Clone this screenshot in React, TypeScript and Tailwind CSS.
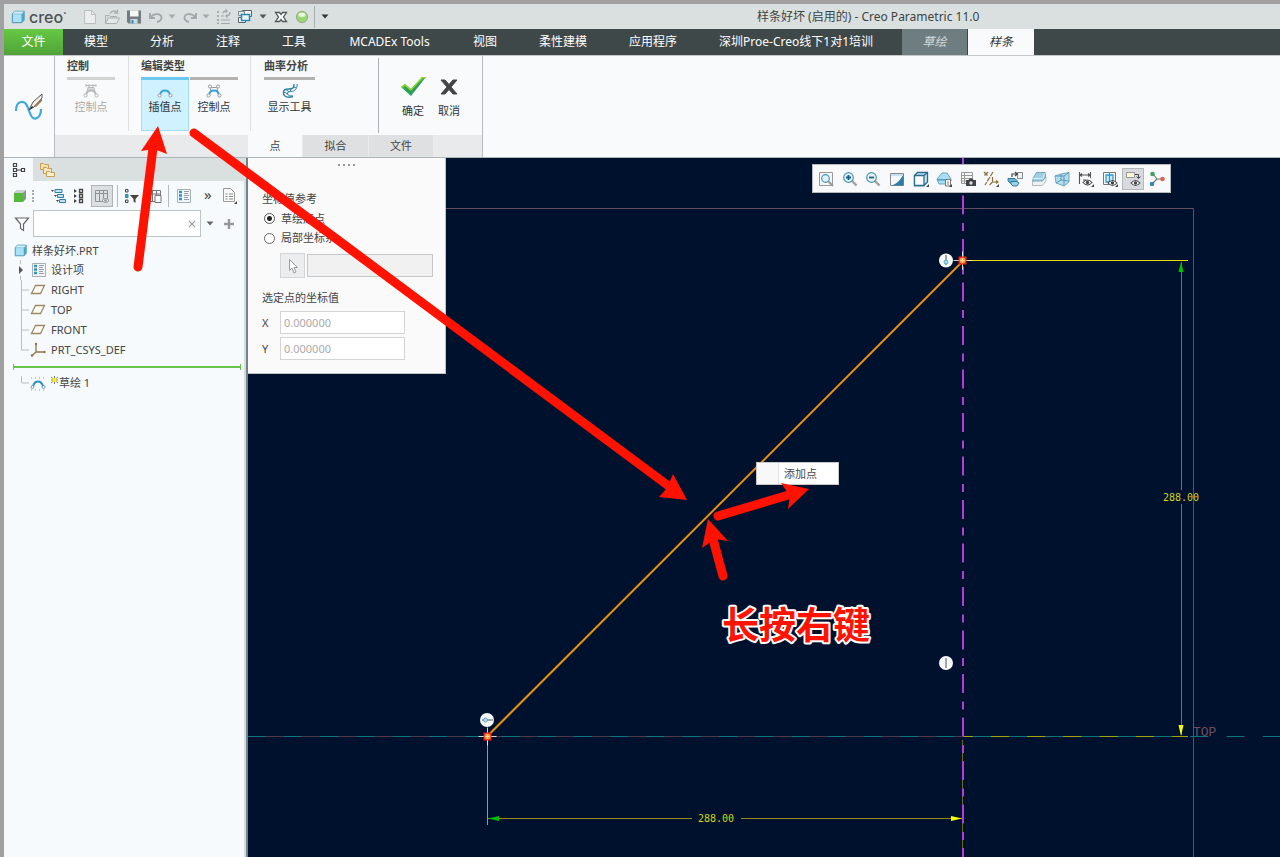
import type { ReactNode } from 'react'
import clsx from 'clsx'

type IconProps = { size?: number; children: ReactNode }

function Icon({ size = 16, children }: IconProps) {
  return (
    <svg width={size} height={size} viewBox="0 0 16 16" fill="none" className="block shrink-0" aria-hidden="true">
      {children}
    </svg>
  )
}

function Caret({ color = '#555' }: { color?: string }) {
  return (
    <svg width="8" height="5" viewBox="0 0 8 5" className="block" aria-hidden="true">
      <path d="M0.5 0.5h7L4 4.5z" fill={color} />
    </svg>
  )
}

/* ---------- shared icons ---------- */

const CubeIcon = ({ size = 16 }: { size?: number }) => (
  <Icon size={size}>
    <path d="M1.5 4.5 4 1.5h11v10l-2.5 3h-11z" fill="#a9e1f7" stroke="#3a87ad" />
    <path d="M12 4.5 15 1.5v10l-3 3z" fill="#4ea3cc" />
    <path d="M1.5 4.5 4 1.5h11L12.3 4.5z" fill="#d5f2fc" stroke="#5fa9cc" strokeWidth=".6" />
  </Icon>
)

const ListIcon = () => (
  <Icon>
    <path d="M1.5 1.5h13v13h-13z" fill="#f3f6f8" stroke="#a6b0b5" />
    <path d="M3 4h3M3 7.5h3M3 11h3" stroke="#2f94c6" strokeWidth="2.4" />
    <path d="M8 3.5h5M8 5.5h4M8 7.5h5M8 9.5h4M8 11.5h5" stroke="#8b979d" strokeWidth=".9" />
  </Icon>
)

const PlaneIcon = () => (
  <Icon>
    <path d="M5.5 3.5h9l-4 8h-9z" fill="#fdfbf5" stroke="#9c8a64" strokeWidth="1.3" />
  </Icon>
)

const CsysIcon = () => (
  <Icon>
    <path d="M6 2v8h9M6 10l-4.500 4" stroke="#8f7448" strokeWidth="1.3" />
    <circle cx="6" cy="2" r="1.200" fill="#8f7448" />
    <circle cx="14.500" cy="10" r="1.200" fill="#8f7448" />
    <circle cx="2" cy="13.500" r="1.200" fill="#8f7448" />
  </Icon>
)

const SketchIcon = () => (
  <Icon>
    <path d="M1 3h14M1 15h14" stroke="#999" strokeDasharray="1 3" />
    <path d="M3 11c2-6 8-6 10 0" stroke="#2e8fbd" strokeWidth="2" />
    <circle cx="2.500" cy="12" r="1.500" fill="#fff" stroke="#4f8aa5" strokeWidth=".8" />
    <circle cx="13.500" cy="12" r="1.500" fill="#fff" stroke="#4f8aa5" strokeWidth=".8" />
  </Icon>
)

const ZoomLens = ({ sign }: { sign: string }) => (
  <Icon>
    <path d="m9.500 9.500 5 5" stroke="#a5a098" strokeWidth="2.4" />
    <circle cx="6.500" cy="6.500" r="4.800" fill="#e3f4fb" stroke="#4b92b5" strokeWidth="1.2" />
    <path d={sign} stroke="#1a5f86" strokeWidth="1.8" />
  </Icon>
)

const Eye = ({ x, y }: { x: number; y: number }) => (
  <g>
    <path d={`M${x} ${y}q4.500-5 9 0q-4.500 5-9 0z`} fill="#fff" stroke="#444" strokeWidth="1.1" />
    <circle cx={x + 4.5} cy={y} r="1.700" fill="#444" />
  </g>
)

const Corner = () => <path d="M16 13v3h-3z" fill="#444" />

/* ---------- title bar ---------- */

function TitleBar() {
  return (
    <header className="flex h-[25px] items-center bg-[#dae0df] text-[#3c4444]">
      <div className="flex w-[78px] shrink-0 items-center gap-1 pl-[7px]">
        <CubeIcon size={14} />
        <span className="font-[Inter] text-[16px] font-medium leading-5 text-[#4b5354]">creo<span className="align-top text-[6px] leading-3">•</span></span>
      </div>
      <div className="flex items-center">
        <button aria-label="新建" className="w-[22px]">
          <Icon><path d="M2.500 1.500h7l4 4v9h-11z" fill="#eceeee" stroke="#b9bebe" /><path d="M9.500 1.500v4h4" stroke="#b9bebe" /></Icon>
        </button>
        <button aria-label="打开" className="w-[22px]">
          <Icon>
            <path d="M1.500 14.500v-8h4l1 1h6v2" fill="#d4d8d8" stroke="#aab0b0" />
            <path d="m1.500 14.500 3-5.500h11l-3 5.500z" fill="#e4e7e7" stroke="#aab0b0" />
            <path d="M6 4.500c2-3 5-3 6.500-1.500M13.500.500v3.500H10" stroke="#aab0b0" strokeWidth="1.3" />
          </Icon>
        </button>
        <button aria-label="保存" className="w-[22px]">
          <Icon>
            <path d="M1 1.500h14v13H2.500L1 13z" fill="#737b80" />
            <path d="M4 1.500h8.500v6H4z" fill="#f6f8f8" />
            <path d="M4.500 10h7v4.500h-7z" fill="#c8dfea" />
            <path d="M5.500 11h2v3.500h-2z" fill="#3d8ab0" />
          </Icon>
        </button>
        <button aria-label="撤消" className="w-5">
          <Icon><path d="M2 4v5h5M2.500 8.500C5 4.500 13 3.500 13.500 8.500c0 3-2 4-4.500 4.500" stroke="#a1a9aa" strokeWidth="1.9" /></Icon>
        </button>
        <button aria-label="撤消列表" className="w-[14px]"><Caret color="#a5acac" /></button>
        <button aria-label="重做" className="w-5">
          <Icon><path d="M14 4v5H9M13.500 8.500C11 4.500 3 3.500 2.500 8.500c0 3 2 4 4.500 4.500" stroke="#a1a9aa" strokeWidth="1.9" /></Icon>
        </button>
        <button aria-label="重做列表" className="w-[14px]"><Caret color="#a5acac" /></button>
        <button aria-label="重新生成" className="w-[21px]">
          <Icon>
            <path d="M1 2h2v2H1zM1 6h2v2H1zM1 10h2v2H1zM1 13.500h2v1.500H1z" fill="#a3aaaa" />
            <path d="M5 7h3M5 11h9M5 14.500h9" stroke="#a3aaaa" strokeWidth="1.2" />
            <path d="M7 4.500C7 2 9 2 11 2M9.500.500 11 2 9.500 3.500M14 3c0 3-1 4-4 4M11.500 5.500 10 7l1.500 1.500" stroke="#a3aaaa" strokeWidth="1.3" />
          </Icon>
        </button>
        <button aria-label="窗口" className="w-[22px]">
          <Icon>
            <path d="M5.500 1.500h9v6h-9zM1.500 8.500h7v5h-7z" fill="#f4f7f8" stroke="#5a6468" />
            <path d="M1.500 2.500h6v4h-6z" fill="#e5eaeb" stroke="#828b8e" />
            <path d="M4.500 5.500h8v6h-8z" fill="#e9f7fd" stroke="#2889b8" strokeWidth="1.5" />
          </Icon>
        </button>
        <button aria-label="窗口列表" className="w-[14px]"><Caret /></button>
        <button aria-label="关闭" className="w-[22px]">
          <Icon>
            <path d="M2.500 3.500h4L8 5.500l1.500-2h4L10.500 8l3 4.500h-4l-1.500-2-1.500 2h-4l3-4.500z" fill="#fff" stroke="#4f5759" strokeWidth="1.3" />
          </Icon>
        </button>
        <button aria-label="状态" className="w-5 border-r border-[#a9b0b0] py-1">
          <Icon size={14}>
            <circle cx="8" cy="8" r="6.500" fill="#9bd674" stroke="#94a390" />
            <ellipse cx="8" cy="5.500" rx="4" ry="2.500" fill="#e6f7dc" />
          </Icon>
        </button>
        <button aria-label="自定义快速访问工具栏" className="ml-[6px]"><Caret color="#333" /></button>
      </div>
      <h1 className="ml-[428px] whitespace-nowrap text-[12px] leading-4">样条好坏 (启用的) - Creo Parametric 11.0</h1>
    </header>
  )
}

const TABS = ['模型', '分析', '注释', '工具', 'MCADEx Tools', '视图', '柔性建模', '应用程序', '深圳Proe-Creo线下1对1培训']

function TabBar() {
  return (
    <nav className="flex h-[26px] items-stretch whitespace-nowrap bg-[#3f4848] text-[12px] leading-4 text-white">
      <button className="w-[59px] bg-linear-to-b from-[#66c943] to-[#4fa336]">文件</button>
      {TABS.map((tab) => (
        <button key={tab} className={clsx('px-[21px]', tab === 'MCADEx Tools' && 'min-w-[125px]')}>{tab}</button>
      ))}
      <button className="ml-2 w-[65px] bg-[#6e7e80] italic text-[#d3dcdc]">草绘</button>
      <button className="ml-px w-[66px] bg-[#f9fafc] italic text-[#333]">样条</button>
    </nav>
  )
}

/* ---------- ribbon ---------- */

function PointsIcon({ frame, arc, dim }: { frame?: boolean; arc?: boolean; dim?: boolean }) {
  const line = dim ? '#b9b9b9' : '#9a9a9a'
  return (
    <Icon>
      {frame && <path d="M3.500 12 5 4.500h6l1.500 7.500" stroke={line} />}
      {frame && !dim && (
        <g fill="#f8f8f8" stroke={line}>
          <circle cx="4" cy="3.500" r="1.600" />
          <circle cx="12" cy="3.500" r="1.600" />
        </g>
      )}
      {dim && <path d="M3 1v3M6 1v3M10 1v3M13 1v3M3 2.500h10M5 6h6" stroke={line} />}
      <path d="M3 12c1-6 9-6 10 0" stroke={arc ? '#3ba3d4' : line} strokeWidth="1.8" />
      <circle cx="2.500" cy="12.500" r="1.600" fill="#f8f8f8" stroke={line} />
      <circle cx="13.500" cy="12.500" r="1.600" fill="#f8f8f8" stroke={line} />
    </Icon>
  )
}

type RibbonButtonProps = { label: string; icon: ReactNode; bar: string; active?: boolean; disabled?: boolean; width?: string }

function RibbonButton({ label, icon, bar, active, disabled, width = 'w-12' }: RibbonButtonProps) {
  return (
    <button
      disabled={disabled}
      className={clsx(
        'flex h-[54px] flex-col items-center border-t-[3px]',
        width,
        bar,
        active && 'bg-[#d0f1ff] shadow-[inset_1px_0_#a5dcf5,inset_-1px_-1px_#a5dcf5]',
        disabled ? 'text-[#aaa]' : 'text-[#333]',
      )}
    >
      <span className="pt-[3px]">{icon}</span>
      <span className="whitespace-nowrap text-[11px] leading-4">{label}</span>
    </button>
  )
}

function RibbonGroup({ title, children }: { title: string; children: ReactNode }) {
  return (
    <section>
      <h2 className="whitespace-nowrap text-[11px] font-semibold leading-5 text-[#444]">{title}</h2>
      <div className="mt-px flex gap-px">{children}</div>
    </section>
  )
}

function Ribbon() {
  return (
    <div className="flex h-[103px] border-b border-t border-b-[#aab6b8] border-t-[#c4c8c8] bg-[#f9fafc]">
      <div className="flex w-[51px] shrink-0 items-center justify-center border-r border-[#b9bcbe]">
        <svg width="32" height="32" viewBox="0 0 32 32" fill="none" aria-hidden="true">
          <path d="M3 20C3 9 12 8 15 17s5 12 9 10 4-7 4-9" stroke="#3fa9dc" strokeWidth="2.200" />
          <path d="m16 19 4-8 9-8v4l-8 9z" fill="#f4f0e8" stroke="#555" />
          <path d="m21 15 8-8v3l-6 6z" fill="#9b7a5c" />
          <path d="m16 19 3-4 1.500 1z" fill="#222" />
        </svg>
      </div>
      <div className="flex w-[428px] flex-col border-r border-[#b9bcbe]">
        <div className="flex flex-1">
          <div className="mb-1 w-[74px] border-r border-[#dcdee0] pl-3">
            <RibbonGroup title="控制">
              <RibbonButton label="控制点" bar="border-[#d2d2d2]" icon={<PointsIcon frame dim />} disabled />
            </RibbonGroup>
          </div>
          <div className="mb-1 w-[122px] border-r border-[#dcdee0] pl-3">
            <RibbonGroup title="编辑类型">
              <RibbonButton label="插值点" bar="border-[#6cc6f2]" icon={<PointsIcon arc />} active />
              <RibbonButton label="控制点" bar="border-[#b5b2b2]" icon={<PointsIcon frame arc />} />
            </RibbonGroup>
          </div>
          <div className="mb-1 w-[127px] pl-[13px]">
            <RibbonGroup title="曲率分析">
              <RibbonButton
                label="显示工具"
                bar="border-[#b5b2b2]"
                width="w-[51px]"
                icon={
                  <Icon>
                    <path d="M12 1c0 4-1 5-5 5S1 7 1.500 10.500 6 15 11 13.500" stroke="#2d7fa6" strokeWidth="1.4" />
                    <path d="M15 1c.500 5-2 7-6 7.500-3 0-4 1-3.500 2.500S8 13 11 13M2 9l4 2M4 6.500 7 9M8 6l1 2.500M12 4l2 1" stroke="#2d7fa6" />
                  </Icon>
                }
              />
            </RibbonGroup>
          </div>
          <div className="my-[2px] flex items-start gap-2 border-l border-[#aeb1b3] pl-5 pt-4 text-[11px] leading-4 text-[#333]">
            <button className="flex w-7 flex-col items-center gap-1 whitespace-nowrap">
              <svg width="27" height="25" viewBox="0 0 27 25" aria-hidden="true">
                <path d="m1 13 4-3 6 5L22 3h4L11 22z" fill="#31a25c" />
                <path d="m1 13 4-3 6 5L22 3h4L11 17z" fill="#8ddb22" />
                <path d="m3 13 2-1 6 5L23 4h1L11 20z" fill="#2f9c5a" />
              </svg>
              确定
            </button>
            <button className="flex w-7 flex-col items-center gap-1 whitespace-nowrap">
              <svg width="20" height="25" viewBox="0 0 20 25" aria-hidden="true">
                <path d="M2 6h4l4 4.500L14 6h4l-6 7 6 7h-4l-4-4.500L6 20H2l6-7z" fill="#444" stroke="#444" />
              </svg>
              取消
            </button>
          </div>
        </div>
        <div className="flex h-[22px] shrink-0 gap-px bg-[#e9eaec] pl-[193px] text-[11px] leading-4 text-[#444]">
          <button className="w-[54px] bg-[#f9fafc]">点</button>
          <button className="w-[65px] bg-[#dfe0e2]">拟合</button>
          <button className="w-16 bg-[#dfe0e2]">文件</button>
        </div>
      </div>
    </div>
  )
}

/* ---------- model tree ---------- */

function TreeToolbar() {
  return (
    <div className="flex h-[29px] items-center pl-2">
      <button aria-label="模型显示" className="w-5">
        <Icon><path d="M2 5 5 2h9v9l-3 3z" fill="#8a9296" /><path d="M2 5h9v9H2z" fill="#55b83b" /><path d="M2 5 5 2h9l-3 3z" fill="#c9cfd1" /></Icon>
      </button>
      <span className="h-3 w-[18px] border-l-2 border-dotted border-[#aaa]" />
      <button aria-label="展开" className="w-[21px]">
        <Icon>
          <path d="M1 2h3L2.500 4zM4 7h3L5.500 9zM6 12h3l-1.500 2z" fill="#444" />
          <path d="M5 1.500h7v3H5zM7.500 6.500h6v3h-6zM9.500 11.500h6v3h-6z" fill="#bfe3f2" stroke="#2f7ea6" />
        </Icon>
      </button>
      <button aria-label="折叠" className="w-5">
        <Icon>
          <path d="m3 1 3 2-3 2zM3 6l3 2-3 2zM3 11l3 2-3 2z" fill="#444" />
          <path d="M8.500 1.500h3v3h-3zM8.500 6.500h3v3h-3zM8.500 11.500h3v3h-3z" fill="#fff" stroke="#444" strokeWidth="1.3" />
        </Icon>
      </button>
      <button aria-label="树列" className="flex h-[22px] w-[22px] items-center justify-center border border-[#aeb3b5] bg-[#dcdfe1]">
        <Icon><path d="M1.500 2.500h12v11h-12zM1.500 5.500h12M5.500 2.500v11M9.500 2.500v8" stroke="#8d9497" /><path d="M8 12.500q3.500-4 7 0q-3.500 4-7 0z" fill="#eee" stroke="#8d9497" /><circle cx="11.500" cy="12.500" r="1.200" fill="#8d9497" /></Icon>
      </button>
      <span className="ml-1 h-[22px] w-[6px] border-l border-[#b4babc]" />
      <button aria-label="树过滤器" className="w-6">
        <Icon>
          <path d="M2.500 1.500h2.500v2.500H2.500zM2.500 12h2.500v2.500H2.500z" fill="#fff" stroke="#444" />
          <path d="M2.500 6.500h2.500v3H2.500z" fill="#58a9ce" stroke="#2d7fa6" />
          <path d="M7 7h9l-3.500 4v4l-2-1.500V11z" fill="#444" />
        </Icon>
      </button>
      <button aria-label="粘贴设置" className="w-5">
        <Icon><path d="M1.500 2.500h12v11h-12zM1.500 6h12M5.500 2.500v11M9.500 2.500V7" stroke="#777" /><path d="M8 7.500h6v7H8z" fill="#fff" stroke="#777" /></Icon>
      </button>
      <span className="ml-[1px] h-[22px] w-2 border-l border-[#b4babc]" />
      <button aria-label="设计项" className="w-6"><ListIcon /></button>
      <button className="w-[21px] pb-1 pl-1 text-left text-[15px] leading-4 text-[#444]" aria-label="更多">»</button>
      <button aria-label="设置">
        <Icon>
          <path d="M2.500.500h7l4 4v9h-11z" fill="#fafafa" stroke="#999" />
          <path d="M4.500 6h2M4.500 8.500h2M4.500 11h2M8 6h4M8 8.500h4M8 11h4" stroke="#888" />
          <Corner />
        </Icon>
      </button>
    </div>
  )
}

function Branch({ last, short }: { last?: boolean; short?: boolean }) {
  return (
    <svg width="10" height="20" viewBox="0 0 10 20" className="block shrink-0" aria-hidden="true">
      <path d={`M1.500 ${short ? 3 : 0}V${last ? 10 : 20}M1.500 10H9`} stroke="#b9c0c2" fill="none" />
    </svg>
  )
}

const DATUMS = [
  { name: 'RIGHT', icon: <PlaneIcon /> },
  { name: 'TOP', icon: <PlaneIcon /> },
  { name: 'FRONT', icon: <PlaneIcon /> },
  { name: 'PRT_CSYS_DEF', icon: <CsysIcon /> },
]

function ModelTree() {
  return (
    <aside className="flex w-[244px] shrink-0 flex-col border-r-2 border-[#75828c] bg-[#f6fafc] text-[#444] shadow-[inset_-2px_0_#d3dcde]">
      <div className="flex h-[23px] bg-[#dae0df]">
        <button aria-label="模型树" className="flex w-[29px] items-center justify-center bg-[#f6fafc]">
          <Icon>
            <path d="M2.500 1.500h3v3h-3zM2.500 6.500h3v3h-3zM2.500 11.500h3v3h-3zM10.500 6.500h3v3h-3zM6 8h4" stroke="#444" strokeWidth="1.2" />
          </Icon>
        </button>
        <button aria-label="文件夹浏览器" className="flex w-7 items-center justify-center">
          <Icon>
            <path d="M1.500 1.500h3l1 1h4v5h-8z" fill="#f7dfa8" stroke="#c79f58" />
            <path d="M4.500 5.500h3l1 1h4v5h-8z" fill="#fbe7b9" stroke="#c79f58" />
            <path d="M7.500 9.500h3l1 1h4v4h-8z" fill="#fdf0d0" stroke="#c79f58" />
          </Icon>
        </button>
      </div>
      <TreeToolbar />
      <div className="flex h-[27px] items-center pl-[10px]">
        <Icon><path d="M1.500 2h13L9.500 8v6.500l-3-2V8z" fill="#fdfdfd" stroke="#666" strokeWidth="1.2" /></Icon>
        <label className="ml-[3px] flex h-[27px] w-[168px] items-center border border-[#b8c4c6] bg-white">
          <input aria-label="过滤" className="min-w-0 flex-1 px-1 text-[11px] outline-none" />
          <button aria-label="清除" className="w-3">
            <svg width="8" height="8" viewBox="0 0 9 9" aria-hidden="true"><path d="m1 1 7 7m0-7-7 7" stroke="#999" strokeWidth="1.200" /></svg>
          </button>
        </label>
        <button aria-label="过滤选项" className="ml-[5px] w-[17px]"><Caret color="#666" /></button>
        <button aria-label="添加">
          <svg width="12" height="12" viewBox="0 0 12 12" className="block" aria-hidden="true"><path d="M6 1v10M1 6h10" stroke="#999" strokeWidth="2.500" /></svg>
        </button>
      </div>
      <ul className="pt-1 text-[11px] leading-5">
        <li>
          <div className="flex h-[19px] items-center gap-[5px] pl-[10px]"><CubeIcon size={13} />样条好坏.PRT</div>
          <ul>
            <li className="flex h-5 items-center pl-[15px]">
              <svg width="12" height="20" viewBox="0 0 12 20" aria-hidden="true"><path d="M1.500 0v4M1.500 16v4" stroke="#b9c0c2" /><path d="m0 6 4 4-4 4z" fill="#555" /></svg>
              <ListIcon />
              <span className="pl-1">设计项</span>
            </li>
            {DATUMS.map((d, i) => (
              <li key={d.name} className="flex h-5 items-center pl-4">
                <Branch last={i === DATUMS.length - 1} />
                {d.icon}
                <span className="pl-[5px]">{d.name}</span>
              </li>
            ))}
          </ul>
        </li>
        <li aria-hidden="true" className="ml-[9px] mr-[5px] mt-px flex h-3 items-center">
          <span className="h-[6px] w-px bg-[#66c54a]" />
          <span className="h-[2px] flex-1 bg-[#66c54a]" />
          <span className="h-[6px] w-px bg-[#66c54a]" />
        </li>
        <li className="flex h-5 items-center pl-4">
          <Branch last short />
          <SketchIcon />
          <svg width="9" height="16" viewBox="0 0 9 16" className="ml-1 block" aria-hidden="true">
            <path d="M1 2l7 6M8 2 1 8M4.500 1v8M1 5h7" stroke="#555" strokeWidth=".8" />
            <path d="M2.500 3h4v4h-4z" fill="#f3ee1a" />
          </svg>
          <span>草绘 1</span>
        </li>
      </ul>
    </aside>
  )
}

/* ---------- point panel ---------- */

function PointPanel() {
  return (
    <form className="absolute left-0 top-0 w-[198px] border-b border-r border-[#b9c5c9] bg-[#fafafa] pb-[13px] pl-[14px] text-[11px] leading-4 text-[#444]">
      <div className="flex h-[33px] justify-center gap-[3px] pr-[14px] pt-[6px]">
        {[0, 1, 2, 3].map((n) => <span key={n} className="size-[2px] bg-[#999]" />)}
      </div>
      <fieldset>
        <legend>坐标值参考</legend>
        <label className="flex h-5 items-center gap-[6px] pl-[2px] pt-[3px]">
          <input type="radio" name="ref" defaultChecked className="m-0 size-[11px] appearance-none rounded-full border border-[#555] bg-[radial-gradient(circle,#222_0_2px,#fff_3px)]" />
          草绘原点
        </label>
        <label className="flex h-5 items-center gap-[6px] pl-[2px] pt-[2px]">
          <input type="radio" name="ref" className="m-0 size-[11px] appearance-none rounded-full border border-[#666] bg-white" />
          局部坐标系
        </label>
      </fieldset>
      <div className="flex items-center gap-[2px] pl-[18px] pt-[6px]">
        <button type="button" aria-label="选择" className="flex h-[25px] w-[25px] items-center justify-center border border-[#d3d6d8] bg-[#ecedef]">
          <Icon><path d="M4.500 1.500v11l2.500-2.500 2 5 2-1-2-4.500h3.500z" fill="#fff" stroke="#999" /></Icon>
        </button>
        <input aria-label="坐标系" disabled className="h-[23px] w-[126px] border border-[#c5c8ca] bg-[#f1f1f1]" />
      </div>
      <p className="pt-3">选定点的坐标值</p>
      <label className="flex items-center pt-[5px]">
        <span className="w-[18px]">X</span>
        <input defaultValue="0.000000" className="h-[23px] w-[125px] border border-[#d2d4d6] bg-white px-[3px] text-[#aaa]" />
      </label>
      <label className="flex items-center pt-[3px]">
        <span className="w-[18px]">Y</span>
        <input defaultValue="0.000000" className="h-[23px] w-[125px] border border-[#d2d4d6] bg-white px-[3px] text-[#aaa]" />
      </label>
    </form>
  )
}

/* ---------- graphics area ---------- */

const VIEW_TOOLS: { label: string; on?: boolean; art: ReactNode }[] = [
  {
    label: '重新调整',
    art: <Icon><path d="M1.500 1.500h13v13h-13z" fill="#f2f4f5" stroke="#999" /><path d="m10 10 5 5" stroke="#a09a90" strokeWidth="2" /><circle cx="7.500" cy="7.500" r="3.800" fill="#dff2fa" stroke="#4b92b5" strokeWidth="1.2" /></Icon>,
  },
  { label: '放大', art: <ZoomLens sign="M4 6.500h5M6.500 4v5" /> },
  { label: '缩小', art: <ZoomLens sign="M4 6.500h5" /> },
  { label: '重画', art: <Icon><path d="M1.500 2.500h13v12h-13z" fill="#f5f8fa" stroke="#888" /><path d="M14.500 3v11.500H2C7 13.500 11 10 14.500 3z" fill="#2f7da5" /><path d="M2 3h12v2H2z" fill="#c7e1ee" /></Icon> },
  { label: '显示样式', art: <Icon><path d="M1.500 4.500l3-3h10v9.500l-3.500 3.500h-9.500z" fill="#bfe4f2" stroke="#2b6d8e" strokeWidth="1.300" /><path d="M1.500 4.500H11v10H1.500zM11 4.500l3.500-3" fill="#fafdff" stroke="#2b6d8e" strokeWidth="1.300" /><Corner /></Icon> },
  { label: '已保存方向', art: <Icon><path d="m1 8 5-6h5l4 6v2l-3 3H3z" fill="#a8dcf2" stroke="#6ba5c0" /><path d="M1 8h14v1.500H1z" fill="#4f9fc4" /><path d="M9.500 8.500h5v6.500h-5z" fill="#fff" stroke="#777" /><path d="M11 11h2M11 13h2" stroke="#777" /><Corner /></Icon> },
  { label: '视图管理器', art: <Icon><path d="M1.500 1.500h11v11h-11zM1.500 4.500h11M1.500 7.500h11M1.500 10h8M4.500 1.500v11" stroke="#999" fill="#f7f7f7" /><path d="M6 9h2.500l1-1.500h3L13.500 9H16v6H6z" fill="#3e4548" /><circle cx="11" cy="12" r="1.700" fill="#ddd" /></Icon> },
  { label: '基准显示过滤器', art: <Icon><path d="m1 1 4 4M5 1 1 5M10 1 2 14" stroke="#8a7341" strokeWidth="1.300" strokeDasharray="5 1" /><path d="M9.500 6v5l-3 3M9.500 11h5M13 9.500l2 1.500-2 1.500" stroke="#8a7341" strokeWidth="1.200" /><Corner /></Icon> },
  { label: '注释显示', art: <Icon><path d="M10.500 1.500h5v6h-5z" fill="#f2f2f2" stroke="#888" /><path d="M5 6V3h5M8 1l2.500 2L8 5" stroke="#444" strokeWidth="1.200" /><path d="M1 7.500h7l2 2v1l-2 1.500H3l-2-2z" fill="#6bb4d4" stroke="#34799c" /><path d="M4 10.500h6l2 1.500-2 3H6l-2-2z" fill="#9bd2ea" stroke="#34799c" /></Icon> },
  { label: '剖面', art: <Icon><path d="M1.500 9.500 5 6h10v4l-3.500 4.500h-10z" fill="#eef1f2" stroke="#b5babc" /><path d="M2 7.500 5.500 1.500h9V6l-3 4H2z" fill="#9dd0e6" stroke="#73a3b7" /><path d="m2 7.500h9.500l3-6" stroke="#d8eef7" /></Icon> },
  { label: '透视图', art: <Icon><path d="m1 5 6-2 8-1.500V11l-5 4-8-3z" fill="#b4dcec" stroke="#73a9c1" /><path d="M1 5h9v9.500M10 5l5-3.500M2 12l5-3V3M7 9l8 1" stroke="#5d9ab6" /></Icon> },
  { label: '尺寸显示', art: <Icon><path d="M1.500 1v12M12.500 1v6M2 4h10M4 2.500 2 4l2 1.500M10 2.500 12 4l-2 1.500M5 9h3" stroke="#555" strokeWidth="1.100" /><Eye x={5} y={11.5} /><Corner /></Icon> },
  { label: '草绘显示', art: <Icon><path d="M1.500 1.500h12v12h-12z" fill="#fff" stroke="#777" /><path d="M4 4h7v7H4zM7.500 1v13" fill="#d2effb" stroke="#2c9dd0" strokeWidth="1.300" /><Eye x={6} y={12} /><Corner /></Icon> },
  { label: '注释可见性', on: true, art: <Icon><path d="M1.500 1.500h8v5h-8z" fill="#fff3da" stroke="#999" /><path d="M10 3.500h3.500V7M11.500 5.500l2 2 2-2" stroke="#444" /><Eye x={6} y={12} /></Icon> },
  { label: '旋转中心', art: <Icon><path d="M4 3l4 5h6M8 8l-5 5" stroke="#777" strokeWidth="1.200" /><circle cx="3.500" cy="3" r="2.300" fill="#3ea35a" /><circle cx="13.500" cy="8" r="2.300" fill="#dd6257" /><circle cx="3" cy="13" r="2.300" fill="#3c86a8" /></Icon> },
]

function ViewToolbar() {
  return (
    <div className="absolute left-[564px] top-[6px] flex h-[29px] w-[359px] items-center justify-between border border-[#b5b9bb] bg-[#f8f9fb] px-[3px]">
      {VIEW_TOOLS.map((t) => (
        <button
          key={t.label}
          aria-label={t.label}
          className={clsx('flex h-[20px] w-5 items-center justify-center', t.on && 'bg-[#d8dadd] shadow-[0_0_0_1px_#b5b8bb]')}
        >
          {t.art}
        </button>
      ))}
    </div>
  )
}

function SplinePoint({ x, y }: { x: number; y: number }) {
  return (
    <g>
      <path d={`M${x - 9} ${y}h18M${x} ${y - 9}v18`} stroke="#fff" strokeOpacity=".8" />
      <path d={`M${x - 4} ${y - 4}h8v8h-8z`} fill="#f0201a" />
      <circle cx={x} cy={y} r="3" fill="#ff9a3c" />
      <path d={`M${x - 2} ${y}h4M${x} ${y - 2}v4`} stroke="#ffe6a0" />
    </g>
  )
}

function Sketch() {
  return (
    <svg className="absolute inset-0 h-full w-full" viewBox="248 158 1032 699" preserveAspectRatio="xMinYMin slice" fill="none">
      {/* datum plane outline */}
      <path d="M248 208.500H1193.500V857" stroke="#64505f" />
      {/* horizontal reference */}
      <path d="M248 736.500H962" stroke="#4d3a48" />
      <path d="M963 736.500h225" stroke="#a3a30c" />
      <path d="M247.750 736.500H1280" stroke="#0b747c" strokeDasharray="18 18.250" />
      {/* vertical centerline */}
      <path d="M962.500 740V857" stroke="#6b6b14" />
      <path d="M963 152V857" stroke="#b13fd6" strokeWidth="2" strokeDasharray="19 8.500 8 8" />
      {/* vertical dimension */}
      <path d="M963 260.500h225" stroke="#dede10" />
      <path d="M1181.500 262V490M1181.500 504V735" stroke="#7b7b22" />
      <path d="m1181 262 2.500 10h-5z" fill="#00c000" />
      <path d="m1181 736-2.500-11h5z" fill="#ff0" />
      {/* horizontal dimension */}
      <path d="M487.500 740v85" stroke="#a8a80c" />
      <path d="M488 818.500h204M741 818.500h221" stroke="#8f8f14" />
      <path d="m488 818.500 11-2.500v5z" fill="#00c000" />
      <path d="m962 818.500-11-2.500v5z" fill="#ff0" />
      <g className="font-['DejaVu_Sans_Mono',monospace] text-[10px]" fill="#d2d414" textAnchor="middle">
        <text x="716" y="822">288.00</text>
        <text x="1181" y="501">288.00</text>
      </g>
      <text x="1193" y="736" fill="#70505c" className="font-['Liberation_Mono',monospace] text-[13px]">TOP</text>
      {/* spline */}
      <path d="M487 736.500 963 261" stroke="#e8920c" strokeWidth="2" />
      <SplinePoint x={487.5} y={736.5} />
      <SplinePoint x={962.5} y={260.5} />
      {/* constraint markers */}
      <g fill="#f6f8fa">
        <circle cx="946" cy="260.500" r="7" />
        <circle cx="487" cy="720" r="7" />
        <circle cx="946" cy="663" r="7" />
      </g>
      <path d="M946 255v10M482 720h11M946 658v10" stroke="#888" strokeWidth="1.500" />
      <circle cx="946" cy="262" r="2" fill="#a9def3" stroke="#4b9cc0" strokeWidth=".8" />
      <circle cx="485.500" cy="720" r="2" fill="#a9def3" stroke="#4b9cc0" strokeWidth=".8" />
    </svg>
  )
}

function GraphicsArea() {
  return (
    <main className="relative min-w-0 flex-1 overflow-hidden bg-[#00112e]">
      <Sketch />
      <PointPanel />
      <ViewToolbar />
      <div role="menu" className="absolute left-[508px] top-[304px] flex h-[23px] w-[83px] border border-[#c8c8c8] bg-white text-[11px] leading-4 text-[#444]">
        <span className="w-[22px] border-r border-[#e3e3e3] bg-[#f8f8f8]" />
        <button role="menuitem" className="pl-[5px]">添加点</button>
      </div>
    </main>
  )
}

/* ---------- tutorial markup on top of the window ---------- */

function Annotations() {
  return (
    <svg className="pointer-events-none absolute inset-0 h-full w-full" viewBox="0 0 1280 857" preserveAspectRatio="xMinYMin slice">
      <g stroke="#ff1200" strokeWidth="9" strokeLinecap="round">
        <path d="M138 267 153 148" />
        <path d="M194 133 670 487" />
        <path d="M718 516 792 494" />
        <path d="M723 576 713 539" />
      </g>
      <g fill="#ff1200">
        <path d="m158 126 9 28-13-5-13 2z" />
        <path d="m687 500-28-3 8-9 6-14z" />
        <path d="m809 489-21 20 2-13-9-13z" />
        <path d="m708 519 20 22-13-2-13 9z" />
      </g>
      <text
        x="722"
        y="639"
        fill="#ff1200"
        stroke="#fff"
        strokeWidth="4"
        strokeLinejoin="round"
        paintOrder="stroke"
        className="text-[37px] font-bold"
      >
        长按右键
      </text>
    </svg>
  )
}

export default function App() {
  return (
    <div className="relative flex min-h-screen flex-col border-l-4 border-t-4 border-[#a0a0a0] font-['Noto_Sans','Noto_Sans_CJK_SC',sans-serif]">
      <TitleBar />
      <TabBar />
      <Ribbon />
      <div className="flex flex-1">
        <ModelTree />
        <GraphicsArea />
      </div>
      <div className="pointer-events-none absolute -left-1 -top-1 bottom-0 right-0">
        <Annotations />
      </div>
    </div>
  )
}
